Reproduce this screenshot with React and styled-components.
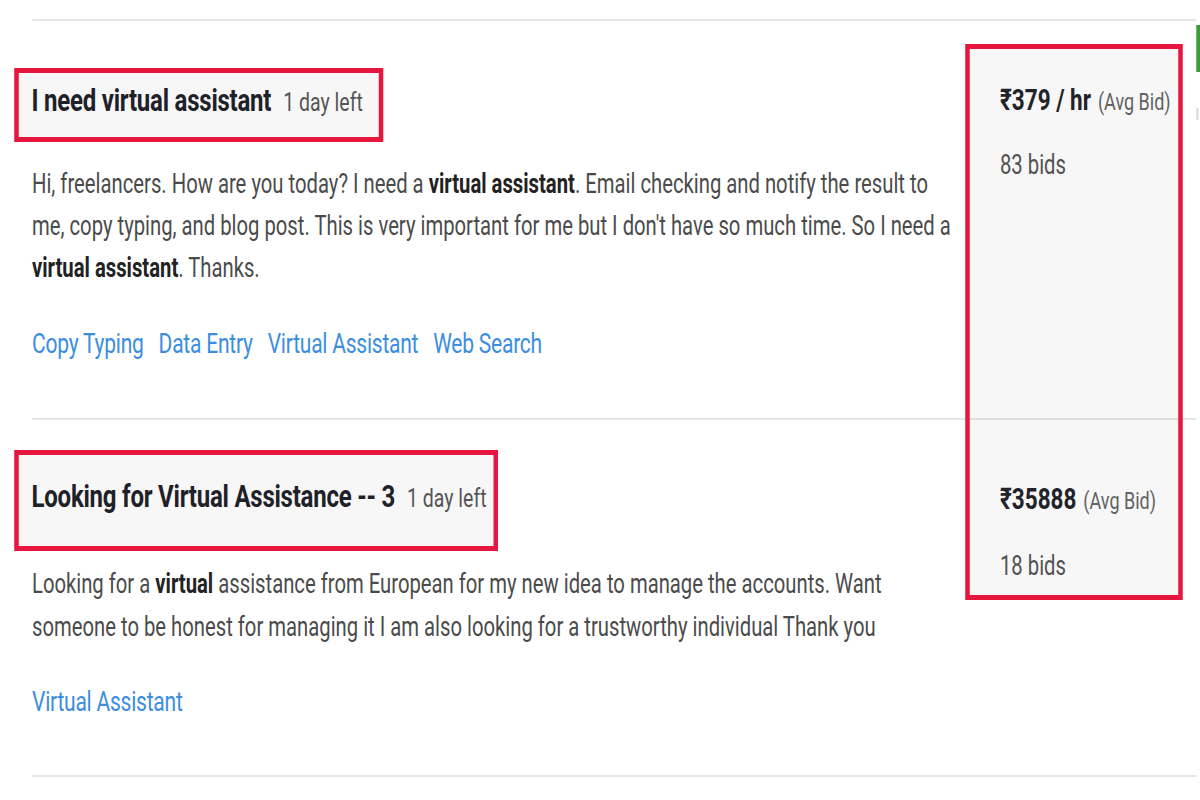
import React from "react";
import styled, { createGlobalStyle } from "styled-components";

// the screenshot is horizontally squeezed, so the whole stage is condensed
const K = 0.75;
const h = (px) => `${(px / K).toFixed(2)}px`;

const projects = [
  {
    id: 1,
    title: "I need virtual assistant",
    left: "1 day left",
    top: 47,
    padTop: 7,
    padBottom: 15,
    right: 16,
    bodyTop: 21,
    bodyLine: 42,
    tagsTop: 34,
    bottom: 53,
    bidsTop: 21,
    lines: [
      <>
        Hi, freelancers. How are you today? I need a <strong>virtual assistant</strong>. Email
        checking and notify the result to
      </>,
      <>
        me, copy typing, and blog post. This is very important for me but I don't have so much
        time. So I need a
      </>,
      <>
        <strong>virtual assistant</strong>. Thanks.
      </>,
    ],
    tags: ["Copy Typing", "Data Entry", "Virtual Assistant", "Web Search"],
    price: "₹379 / hr",
    bids: "83 bids",
  },
  {
    id: 2,
    title: "Looking for Virtual Assistance -- 3",
    left: "1 day left",
    top: 30,
    padTop: 21,
    padBottom: 28,
    right: 7,
    bodyTop: 12,
    bodyLine: 43,
    tagsTop: 32,
    bottom: 52,
    bidsTop: 23,
    lines: [
      <>
        Looking for a <strong>virtual</strong> assistance from European for my new idea to manage
        the accounts. Want
      </>,
      <>
        someone to be honest for managing it I am also looking for a trustworthy individual Thank
        you
      </>,
    ],
    tags: ["Virtual Assistant"],
    price: "₹35888",
    bids: "18 bids",
  },
];

function App() {
  return (
    <>
      <GlobalStyle />
      <Stage>
        <Main>
          <List>
            {projects.map((p) => (
              <Row key={p.id} $bottom={p.bottom}>
                <Details>
                  <TitleBox
                    $top={p.top}
                    $padTop={p.padTop}
                    $padBottom={p.padBottom}
                    $right={p.right}
                  >
                    <Title>{p.title}</Title>
                    <TimeLeft>{p.left}</TimeLeft>
                  </TitleBox>
                  <Description $top={p.bodyTop} $line={p.bodyLine}>
                    {p.lines.map((line, i) => (
                      <Line key={i}>{line}</Line>
                    ))}
                  </Description>
                  <Tags $top={p.tagsTop}>
                    {p.tags.map((t) => (
                      <Tag key={t} href="#">
                        {t}
                      </Tag>
                    ))}
                  </Tags>
                </Details>
                <PriceCol>
                  <Price>
                    {p.price}
                    <AvgBid>(Avg Bid)</AvgBid>
                  </Price>
                  <Bids $top={p.bidsTop}>{p.bids}</Bids>
                </PriceCol>
              </Row>
            ))}
          </List>
        </Main>
        <Sidebar>
          <GreenTab />
          <GreyTick />
        </Sidebar>
        <BidHighlight />
      </Stage>
    </>
  );
}

const GlobalStyle = createGlobalStyle`
  html, body {
    margin: 0;
    padding: 0;
    overflow: hidden;
    background: #fff;
  }
  body {
    font-family: Roboto, "Noto Sans", "Liberation Sans", sans-serif;
  }
`;

const Stage = styled.div`
  position: relative;
  display: flex;
  width: ${h(1200)};
  height: 800px;
  transform: scaleX(${K});
  transform-origin: 0 0;
  background: #fff;
`;

const Main = styled.main`
  box-sizing: border-box;
  width: ${h(1196)};
  padding: 19px 0 0 ${h(32)};
`;

const List = styled.section`
  border-top: 2px solid #e6e6e6;
`;

const Row = styled.article`
  display: grid;
  grid-template-columns: ${h(968)} 1fr;
  padding-bottom: ${(p) => p.$bottom}px;
  border-bottom: 2px solid #e6e6e6;
`;

const Details = styled.div`
  display: flex;
  flex-direction: column;
  align-items: flex-start;
`;

const TitleBox = styled.h2`
  display: inline-flex;
  align-items: baseline;
  margin: ${(p) => p.$top}px 0 0 -${h(18)};
  padding: ${(p) => p.$padTop}px ${(p) => h(p.$right)} ${(p) => p.$padBottom}px ${h(13)};
  border: 5px solid #e6163e;
  border-left-width: ${h(5)};
  border-right-width: ${h(5)};
  background: #f7f7f7;
  line-height: 40px;
`;

const Title = styled.span`
  font-size: 32px;
  font-weight: 700;
  color: #1f2128;
  letter-spacing: -0.3px;
`;

const TimeLeft = styled.span`
  margin-left: ${h(12)};
  font-size: 26px;
  font-weight: 400;
  color: #555;
`;

const Description = styled.p`
  margin: ${(p) => p.$top}px 0 0;
  font-size: 27px;
  line-height: ${(p) => p.$line}px;
  color: #4b4b4b;
  white-space: nowrap;

  strong {
    font-weight: 700;
    color: #222;
  }
`;

const Line = styled.span`
  display: block;
`;

const Tags = styled.div`
  display: flex;
  gap: ${h(15)};
  margin-top: ${(p) => p.$top}px;
`;

const Tag = styled.a`
  font-size: 28px;
  letter-spacing: -0.3px;
  line-height: 42px;
  color: #3b8de0;
  text-decoration: none;
`;

const PriceCol = styled.div`
  padding-top: 58px;
`;

const Price = styled.div`
  font-size: 30px;
  font-weight: 700;
  line-height: 42px;
  color: #23252b;
  white-space: nowrap;
`;

const AvgBid = styled.span`
  margin-left: ${h(7)};
  font-size: 24px;
  font-weight: 400;
  color: #666;
`;

const Bids = styled.div`
  margin-top: ${(p) => p.$top}px;
  font-size: 27px;
  line-height: 42px;
  color: #555;
`;

const Sidebar = styled.aside`
  flex: 1;
  display: flex;
  flex-direction: column;
  gap: 36px;
  padding-top: 25px;
`;

const GreenTab = styled.div`
  height: 47px;
  background: #3a9e3c;
`;

const GreyTick = styled.div`
  width: 60%;
  height: 12px;
  background: #ddd;
`;

// red annotation drawn over the bid column of both rows
const BidHighlight = styled.div`
  position: absolute;
  top: 44px;
  left: ${h(965)};
  width: ${h(218)};
  height: 556px;
  box-sizing: border-box;
  border: 5px solid #e6163e;
  border-left-width: ${h(5)};
  border-right-width: ${h(5)};
  background: rgba(0, 0, 0, 0.03);
  pointer-events: none;
`;

export default App;
